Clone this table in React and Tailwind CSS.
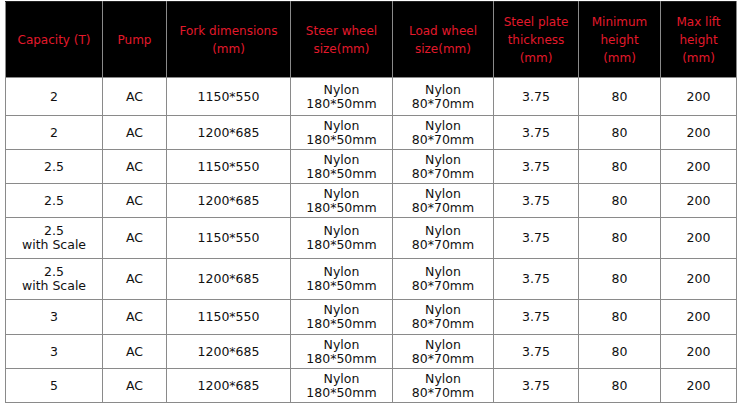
import React from "react";

const headers = [
  ["Capacity (T)"],
  ["Pump"],
  ["Fork dimensions", "(mm)"],
  ["Steer wheel", "size(mm)"],
  ["Load wheel", "size(mm)"],
  ["Steel plate", "thickness", "(mm)"],
  ["Minimum", "height", "(mm)"],
  ["Max lift", "height", "(mm)"],
];

const widths = [97, 64, 124, 102, 101, 85, 82, 76];

const rows = [
  { h: 38, cap: ["2"], fork: "1150*550" },
  { h: 34, cap: ["2"], fork: "1200*685" },
  { h: 34, cap: ["2.5"], fork: "1150*550" },
  { h: 34, cap: ["2.5"], fork: "1200*685" },
  { h: 41, cap: ["2.5", "with Scale"], fork: "1150*550" },
  { h: 41, cap: ["2.5", "with Scale"], fork: "1200*685" },
  { h: 35, cap: ["3"], fork: "1150*550" },
  { h: 34, cap: ["3"], fork: "1200*685" },
  { h: 34, cap: ["5"], fork: "1200*685" },
];

const rowH = {
  38: "h-[38px]",
  34: "h-[34px]",
  41: "h-[41px]",
  35: "h-[35px]",
};

function Lines({ lines }) {
  return lines.map((l, i) => (
    <div key={i}>{l}</div>
  ));
}

export default function App() {
  return (
    <div className="bg-white w-[738px] h-[406px] pl-[5px] pt-[1px]">
      <table
        className="border-collapse table-fixed border border-[#222] text-center"
        style={{ width: 731, fontFamily: '"DejaVu Sans", Verdana, sans-serif' }}
      >
        <colgroup>
          {widths.map((w, i) => (
            <col key={i} style={{ width: w }} />
          ))}
        </colgroup>
        <thead>
          <tr className="h-[76px] bg-black">
            {headers.map((h, i) => (
              <th
                key={i}
                className="border border-[#8a8a8a] border-t-[#222] font-normal text-[12px] leading-[18px] text-[#e3192b] align-middle p-0"
              >
                <Lines lines={h} />
              </th>
            ))}
          </tr>
        </thead>
        <tbody className="text-[12.5px] leading-[14px] text-[#111]">
          {rows.map((r, i) => (
            <tr key={i} className={rowH[r.h]}>
              <td className="border border-[#8a8a8a] p-0 align-middle">
                <Lines lines={r.cap} />
              </td>
              <td className="border border-[#8a8a8a] p-0 align-middle">AC</td>
              <td className="border border-[#8a8a8a] p-0 align-middle">{r.fork}</td>
              <td className="border border-[#8a8a8a] p-0 align-middle">
                <div>Nylon</div>
                <div>180*50mm</div>
              </td>
              <td className="border border-[#8a8a8a] p-0 align-middle">
                <div>Nylon</div>
                <div>80*70mm</div>
              </td>
              <td className="border border-[#8a8a8a] p-0 align-middle">3.75</td>
              <td className="border border-[#8a8a8a] p-0 align-middle">80</td>
              <td className="border border-[#8a8a8a] p-0 align-middle">200</td>
            </tr>
          ))}
        </tbody>
      </table>
    </div>
  );
}
